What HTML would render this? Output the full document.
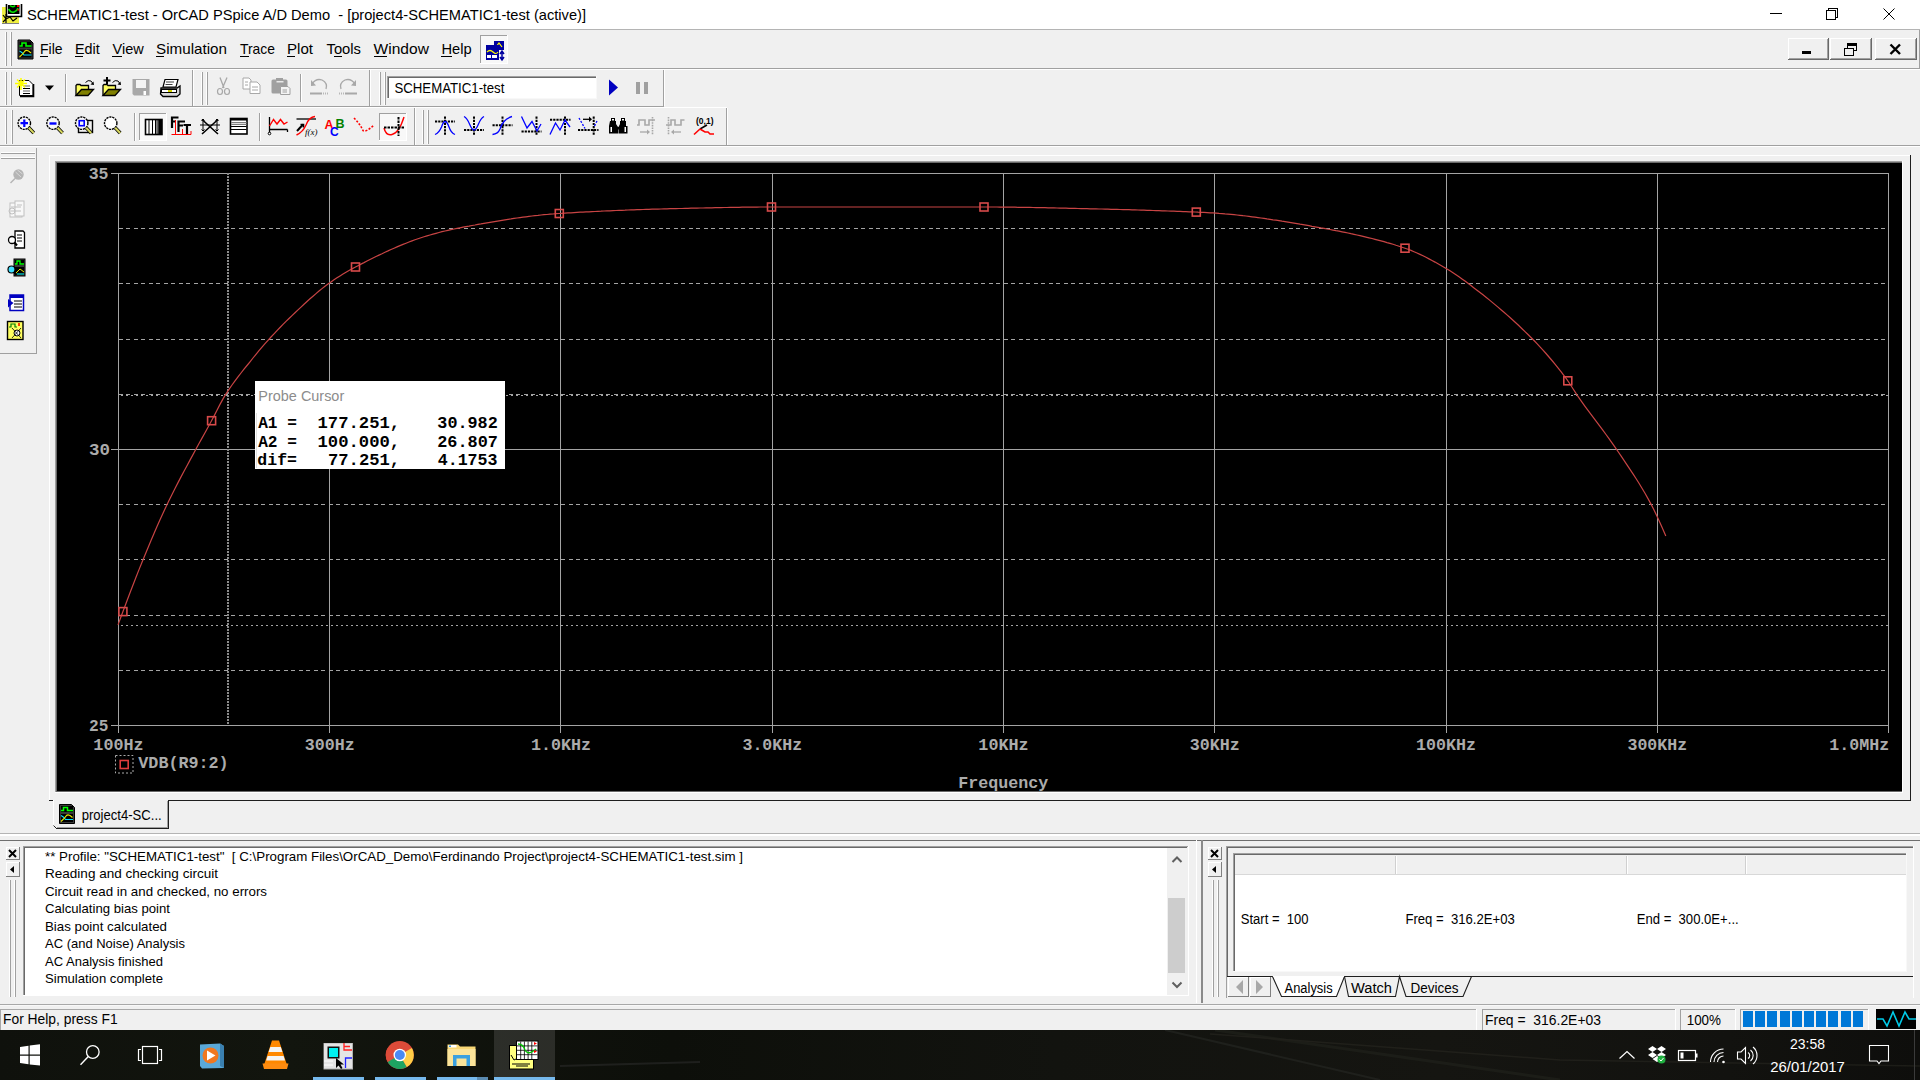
<!DOCTYPE html>
<html><head><meta charset="utf-8"><title>OrCAD PSpice</title>
<style>
html,body{margin:0;padding:0;width:1920px;height:1080px;overflow:hidden;background:#f0f0f0}
svg{position:absolute;left:0;top:0;display:block}
</style></head><body>
<svg width="1920" height="1080" viewBox="0 0 1920 1080" shape-rendering="crispEdges">
<rect x="0" y="0" width="1920" height="29" fill="#fff" />
<text x="27" y="20" font-family="Liberation Sans" font-size="15" font-weight="400" fill="#000" text-anchor="start" style="white-space:pre" textLength="559" lengthAdjust="spacingAndGlyphs" >SCHEMATIC1-test - OrCAD PSpice A/D Demo  - [project4-SCHEMATIC1-test (active)]</text>
<rect x="1770" y="13" width="12" height="1" fill="#000" />
<g fill="none" stroke="#000" stroke-width="1"><rect x="1826.5" y="10.5" width="9" height="9"/><path d="M1828.5,10.5 V8.5 H1837.5 V17.5 H1835.5"/><path d="M1883.5,8.5 L1894.5,19.5 M1894.5,8.5 L1883.5,19.5" shape-rendering="auto"/></g>
<rect x="0" y="29" width="1920" height="1" fill="#b4b4b4" />
<rect x="5" y="32" width="1" height="34" fill="#fff" />
<rect x="6" y="32" width="1" height="34" fill="#a0a0a0" />
<rect x="10" y="32" width="1" height="34" fill="#fff" />
<rect x="11" y="32" width="1" height="34" fill="#a0a0a0" />
<text x="40" y="53.5" font-family="Liberation Sans" font-size="15" font-weight="400" fill="#000" text-anchor="start" style="white-space:pre" textLength="22.5" lengthAdjust="spacingAndGlyphs" >File</text>
<text x="75" y="53.5" font-family="Liberation Sans" font-size="15" font-weight="400" fill="#000" text-anchor="start" style="white-space:pre" textLength="24.7" lengthAdjust="spacingAndGlyphs" >Edit</text>
<text x="112.5" y="53.5" font-family="Liberation Sans" font-size="15" font-weight="400" fill="#000" text-anchor="start" style="white-space:pre" textLength="31.2" lengthAdjust="spacingAndGlyphs" >View</text>
<text x="156" y="53.5" font-family="Liberation Sans" font-size="15" font-weight="400" fill="#000" text-anchor="start" style="white-space:pre" textLength="71" lengthAdjust="spacingAndGlyphs" >Simulation</text>
<text x="240" y="53.5" font-family="Liberation Sans" font-size="15" font-weight="400" fill="#000" text-anchor="start" style="white-space:pre" textLength="35" lengthAdjust="spacingAndGlyphs" >Trace</text>
<text x="287" y="53.5" font-family="Liberation Sans" font-size="15" font-weight="400" fill="#000" text-anchor="start" style="white-space:pre" textLength="26" lengthAdjust="spacingAndGlyphs" >Plot</text>
<text x="326.5" y="53.5" font-family="Liberation Sans" font-size="15" font-weight="400" fill="#000" text-anchor="start" style="white-space:pre" textLength="34.5" lengthAdjust="spacingAndGlyphs" >Tools</text>
<text x="373.6" y="53.5" font-family="Liberation Sans" font-size="15" font-weight="400" fill="#000" text-anchor="start" style="white-space:pre" textLength="55.3" lengthAdjust="spacingAndGlyphs" >Window</text>
<text x="441.4" y="53.5" font-family="Liberation Sans" font-size="15" font-weight="400" fill="#000" text-anchor="start" style="white-space:pre" textLength="30.2" lengthAdjust="spacingAndGlyphs" >Help</text>
<rect x="40" y="56" width="8" height="1" fill="#000" />
<rect x="75" y="56" width="8" height="1" fill="#000" />
<rect x="112" y="56" width="10" height="1" fill="#000" />
<rect x="156" y="56" width="8" height="1" fill="#000" />
<rect x="240" y="56" width="9" height="1" fill="#000" />
<rect x="287" y="56" width="8" height="1" fill="#000" />
<rect x="334" y="56" width="8" height="1" fill="#000" />
<rect x="374" y="56" width="13" height="1" fill="#000" />
<rect x="441" y="56" width="11" height="1" fill="#000" />
<rect x="480" y="35" width="28" height="29" fill="#f8f8f8" />
<rect x="480" y="35" width="28" height="1" fill="#a0a0a0" />
<rect x="480" y="35" width="1" height="29" fill="#a0a0a0" />
<rect x="480" y="63" width="28" height="1" fill="#fff" />
<rect x="507" y="35" width="1" height="29" fill="#fff" />
<rect x="1788" y="38" width="41" height="22" fill="#f0f0f0" />
<rect x="1788" y="38" width="41" height="1" fill="#fff" />
<rect x="1788" y="38" width="1" height="22" fill="#fff" />
<rect x="1788" y="59" width="41" height="1" fill="#696969" />
<rect x="1828" y="38" width="1" height="22" fill="#696969" />
<rect x="1789" y="58" width="39" height="1" fill="#a0a0a0" />
<rect x="1827" y="39" width="1" height="20" fill="#a0a0a0" />
<rect x="1830" y="38" width="42" height="22" fill="#f0f0f0" />
<rect x="1830" y="38" width="42" height="1" fill="#fff" />
<rect x="1830" y="38" width="1" height="22" fill="#fff" />
<rect x="1830" y="59" width="42" height="1" fill="#696969" />
<rect x="1871" y="38" width="1" height="22" fill="#696969" />
<rect x="1831" y="58" width="40" height="1" fill="#a0a0a0" />
<rect x="1870" y="39" width="1" height="20" fill="#a0a0a0" />
<rect x="1875" y="38" width="42" height="22" fill="#f0f0f0" />
<rect x="1875" y="38" width="42" height="1" fill="#fff" />
<rect x="1875" y="38" width="1" height="22" fill="#fff" />
<rect x="1875" y="59" width="42" height="1" fill="#696969" />
<rect x="1916" y="38" width="1" height="22" fill="#696969" />
<rect x="1876" y="58" width="40" height="1" fill="#a0a0a0" />
<rect x="1915" y="39" width="1" height="20" fill="#a0a0a0" />
<rect x="1802" y="51" width="9" height="3" fill="#000" />
<g fill="none" stroke="#000" stroke-width="1.2"><rect x="1844.5" y="48.5" width="9" height="7"/><path d="M1847.5,48.5 V43.5 H1856.5 V50.5 H1853.5"/><path d="M1847.5,44.5 H1856.5" stroke-width="2"/></g>
<path d="M1890.5,44.5 L1900,54 M1900,44.5 L1890.5,54" stroke="#000" stroke-width="2.4" shape-rendering="auto"/>
<rect x="1919" y="30" width="1" height="38" fill="#a0a0a0" />
<rect x="0" y="68" width="1920" height="1" fill="#a0a0a0" />
<rect x="0" y="69" width="1920" height="1" fill="#fff" />
<rect x="5" y="72" width="1" height="33" fill="#fff" />
<rect x="6" y="72" width="1" height="33" fill="#a0a0a0" />
<rect x="10" y="72" width="1" height="33" fill="#fff" />
<rect x="11" y="72" width="1" height="33" fill="#a0a0a0" />
<rect x="65" y="74" width="1" height="28" fill="#a0a0a0" />
<rect x="66" y="74" width="1" height="28" fill="#fff" />
<rect x="192" y="70" width="1" height="36" fill="#a0a0a0" />
<rect x="193" y="70" width="1" height="36" fill="#fff" />
<rect x="201" y="72" width="1" height="33" fill="#fff" />
<rect x="202" y="72" width="1" height="33" fill="#a0a0a0" />
<rect x="206" y="72" width="1" height="33" fill="#fff" />
<rect x="207" y="72" width="1" height="33" fill="#a0a0a0" />
<rect x="300" y="74" width="1" height="28" fill="#a0a0a0" />
<rect x="301" y="74" width="1" height="28" fill="#fff" />
<rect x="369" y="70" width="1" height="36" fill="#a0a0a0" />
<rect x="370" y="70" width="1" height="36" fill="#fff" />
<rect x="379" y="72" width="1" height="33" fill="#fff" />
<rect x="380" y="72" width="1" height="33" fill="#a0a0a0" />
<rect x="384" y="72" width="1" height="33" fill="#fff" />
<rect x="385" y="72" width="1" height="33" fill="#a0a0a0" />
<rect x="387" y="76" width="210" height="23" fill="#fff" />
<rect x="387" y="76" width="210" height="1" fill="#a0a0a0" />
<rect x="387" y="76" width="1" height="23" fill="#a0a0a0" />
<rect x="388" y="77" width="208" height="1" fill="#696969" />
<rect x="388" y="77" width="1" height="21" fill="#696969" />
<rect x="387" y="98" width="210" height="1" fill="#f8f8f8" />
<rect x="596" y="76" width="1" height="23" fill="#f8f8f8" />
<text x="394.4" y="92.6" font-family="Liberation Sans" font-size="14" font-weight="400" fill="#000" text-anchor="start" style="white-space:pre" textLength="110" lengthAdjust="spacingAndGlyphs" >SCHEMATIC1-test</text>
<path d="M609,79.5 L618,87.5 L609,95.5 Z" fill="#0000c0" shape-rendering="auto"/>
<rect x="636" y="82" width="4" height="12" fill="#a0a0a0" />
<rect x="644" y="82" width="4" height="12" fill="#a0a0a0" />
<rect x="663" y="70" width="1" height="36" fill="#a0a0a0" />
<rect x="664" y="70" width="1" height="36" fill="#fff" />
<rect x="0" y="106" width="664" height="1" fill="#a0a0a0" />
<rect x="0" y="107" width="727" height="1" fill="#fff" />
<rect x="5" y="110" width="1" height="34" fill="#fff" />
<rect x="6" y="110" width="1" height="34" fill="#a0a0a0" />
<rect x="11" y="110" width="1" height="34" fill="#fff" />
<rect x="12" y="110" width="1" height="34" fill="#a0a0a0" />
<rect x="134" y="113" width="1" height="28" fill="#a0a0a0" />
<rect x="135" y="113" width="1" height="28" fill="#fff" />
<rect x="259" y="113" width="1" height="28" fill="#a0a0a0" />
<rect x="260" y="113" width="1" height="28" fill="#fff" />
<rect x="139" y="113" width="28" height="28" fill="#f8f8f8" />
<rect x="139" y="113" width="28" height="1" fill="#a0a0a0" />
<rect x="139" y="113" width="1" height="28" fill="#a0a0a0" />
<rect x="139" y="140" width="28" height="1" fill="#fff" />
<rect x="166" y="113" width="1" height="28" fill="#fff" />
<rect x="379" y="113" width="28" height="28" fill="#f8f8f8" />
<rect x="379" y="113" width="28" height="1" fill="#a0a0a0" />
<rect x="379" y="113" width="1" height="28" fill="#a0a0a0" />
<rect x="379" y="140" width="28" height="1" fill="#fff" />
<rect x="406" y="113" width="1" height="28" fill="#fff" />
<rect x="414" y="108" width="1" height="37" fill="#a0a0a0" />
<rect x="415" y="108" width="1" height="37" fill="#fff" />
<rect x="422" y="110" width="1" height="34" fill="#fff" />
<rect x="423" y="110" width="1" height="34" fill="#a0a0a0" />
<rect x="427" y="110" width="1" height="34" fill="#fff" />
<rect x="428" y="110" width="1" height="34" fill="#a0a0a0" />
<rect x="726" y="108" width="1" height="37" fill="#a0a0a0" />
<rect x="727" y="108" width="1" height="37" fill="#fff" />
<rect x="0" y="145" width="1920" height="1" fill="#a0a0a0" />
<rect x="0" y="146" width="1920" height="1" fill="#fff" />
<rect x="36" y="148" width="1" height="206" fill="#a0a0a0" />
<rect x="0" y="353" width="37" height="1" fill="#a0a0a0" />
<rect x="1" y="152" width="34" height="1" fill="#fff" />
<rect x="1" y="153" width="34" height="1" fill="#a0a0a0" />
<rect x="1" y="157" width="34" height="1" fill="#fff" />
<rect x="1" y="158" width="34" height="1" fill="#a0a0a0" />
<rect x="49" y="155" width="1862" height="1" fill="#fff" />
<rect x="49" y="155" width="1" height="643" fill="#fff" />
<rect x="1910" y="155" width="1" height="646" fill="#1e1e1e" />
<rect x="49" y="800" width="1862" height="1" fill="#1e1e1e" />
<rect x="55" y="161" width="1848" height="632" fill="#fff" />
<rect x="55" y="161" width="1847" height="631" fill="#a0a0a0" />
<rect x="56" y="162" width="1846" height="630" fill="#696969" />
<rect x="57" y="163" width="1845" height="628" fill="#000" />
<g shape-rendering="auto">
<line x1="329.5" y1="173" x2="329.5" y2="733" stroke="#a4a4a4" stroke-width="1"/>
<line x1="560.5" y1="173" x2="560.5" y2="733" stroke="#a4a4a4" stroke-width="1"/>
<line x1="772.5" y1="173" x2="772.5" y2="733" stroke="#a4a4a4" stroke-width="1"/>
<line x1="1003.5" y1="173" x2="1003.5" y2="733" stroke="#a4a4a4" stroke-width="1"/>
<line x1="1214.5" y1="173" x2="1214.5" y2="733" stroke="#a4a4a4" stroke-width="1"/>
<line x1="1446.5" y1="173" x2="1446.5" y2="733" stroke="#a4a4a4" stroke-width="1"/>
<line x1="1657.5" y1="173" x2="1657.5" y2="733" stroke="#a4a4a4" stroke-width="1"/>
<line x1="1888.5" y1="173" x2="1888.5" y2="733" stroke="#a4a4a4" stroke-width="1"/>
<line x1="111" y1="725.5" x2="1888" y2="725.5" stroke="#a4a4a4" stroke-width="1"/>
<line x1="119" y1="670.5" x2="1888" y2="670.5" stroke="#a4a4a4" stroke-width="1" stroke-dasharray="4 3 4 4" shape-rendering="crispEdges"/>
<line x1="119" y1="615.5" x2="1888" y2="615.5" stroke="#a4a4a4" stroke-width="1" stroke-dasharray="4 3 4 4" shape-rendering="crispEdges"/>
<line x1="119" y1="559.5" x2="1888" y2="559.5" stroke="#a4a4a4" stroke-width="1" stroke-dasharray="4 3 4 4" shape-rendering="crispEdges"/>
<line x1="119" y1="504.5" x2="1888" y2="504.5" stroke="#a4a4a4" stroke-width="1" stroke-dasharray="4 3 4 4" shape-rendering="crispEdges"/>
<line x1="111" y1="449.5" x2="1888" y2="449.5" stroke="#a4a4a4" stroke-width="1"/>
<line x1="119" y1="394.5" x2="1888" y2="394.5" stroke="#a4a4a4" stroke-width="1" stroke-dasharray="4 3 4 4" shape-rendering="crispEdges"/>
<line x1="119" y1="339.5" x2="1888" y2="339.5" stroke="#a4a4a4" stroke-width="1" stroke-dasharray="4 3 4 4" shape-rendering="crispEdges"/>
<line x1="119" y1="283.5" x2="1888" y2="283.5" stroke="#a4a4a4" stroke-width="1" stroke-dasharray="4 3 4 4" shape-rendering="crispEdges"/>
<line x1="119" y1="228.5" x2="1888" y2="228.5" stroke="#a4a4a4" stroke-width="1" stroke-dasharray="4 3 4 4" shape-rendering="crispEdges"/>
<line x1="111" y1="173.5" x2="1888" y2="173.5" stroke="#a4a4a4" stroke-width="1"/>
<line x1="118.5" y1="173" x2="118.5" y2="733" stroke="#a4a4a4" stroke-width="1"/>
<line x1="228" y1="173" x2="228" y2="725" stroke="#8c8c8c" stroke-width="2" stroke-dasharray="2 1" shape-rendering="crispEdges"/>
<line x1="121" y1="395.5" x2="1888" y2="395.5" stroke="#a4a4a4" stroke-width="1" stroke-dasharray="2 3" shape-rendering="crispEdges"/>
<line x1="121" y1="625.5" x2="1888" y2="625.5" stroke="#a4a4a4" stroke-width="1" stroke-dasharray="2 3" shape-rendering="crispEdges"/>
<path d="M118.0,624.9 L121.0,616.7 L124.0,608.7 L127.0,600.7 L130.0,592.8 L133.0,585.0 L136.0,577.2 L139.0,569.6 L142.0,562.2 L145.0,554.9 L148.0,547.7 L151.0,540.5 L154.0,533.5 L157.0,526.6 L160.0,519.8 L163.0,513.2 L166.0,506.7 L169.0,500.5 L172.0,494.4 L175.0,488.4 L178.0,482.6 L181.0,476.9 L184.0,471.2 L187.0,465.7 L190.0,460.1 L193.0,454.6 L196.0,449.0 L199.0,443.5 L202.0,438.1 L205.0,432.7 L208.0,427.3 L211.0,421.8 L214.0,416.1 L217.0,410.2 L220.0,404.4 L223.0,398.9 L226.0,393.9 L229.0,389.3 L232.0,385.0 L235.0,380.9 L238.0,376.9 L241.0,373.0 L244.0,369.2 L247.0,365.5 L250.0,361.8 L253.0,358.0 L256.0,354.3 L259.0,350.7 L262.0,347.1 L265.0,343.7 L268.0,340.3 L271.0,337.0 L274.0,333.8 L277.0,330.6 L280.0,327.5 L283.0,324.4 L286.0,321.4 L289.0,318.5 L292.0,315.6 L295.0,312.8 L298.0,309.9 L301.0,307.1 L304.0,304.3 L307.0,301.5 L310.0,298.8 L313.0,296.2 L316.0,293.6 L319.0,291.0 L322.0,288.6 L325.0,286.3 L328.0,284.0 L331.0,281.9 L334.0,279.8 L337.0,277.8 L340.0,275.9 L343.0,274.1 L346.0,272.3 L349.0,270.6 L352.0,268.9 L355.0,267.3 L358.0,265.7 L361.0,264.1 L364.0,262.6 L367.0,261.0 L370.0,259.5 L373.0,258.0 L376.0,256.5 L379.0,255.1 L382.0,253.7 L385.0,252.2 L388.0,250.9 L391.0,249.5 L394.0,248.2 L397.0,246.9 L400.0,245.6 L403.0,244.4 L406.0,243.2 L409.0,242.0 L412.0,240.9 L415.0,239.8 L418.0,238.8 L421.0,237.8 L424.0,236.8 L427.0,235.9 L430.0,235.0 L433.0,234.1 L436.0,233.3 L439.0,232.5 L442.0,231.7 L445.0,231.0 L448.0,230.3 L451.0,229.6 L454.0,229.0 L457.0,228.4 L460.0,227.8 L463.0,227.2 L466.0,226.6 L469.0,226.1 L472.0,225.5 L475.0,225.0 L478.0,224.4 L481.0,223.9 L484.0,223.3 L487.0,222.8 L490.0,222.3 L493.0,221.8 L496.0,221.3 L499.0,220.8 L502.0,220.3 L505.0,219.8 L508.0,219.3 L511.0,218.9 L514.0,218.4 L517.0,218.0 L520.0,217.6 L523.0,217.2 L526.0,216.8 L529.0,216.4 L532.0,216.0 L535.0,215.7 L538.0,215.4 L541.0,215.0 L544.0,214.7 L547.0,214.5 L550.0,214.2 L553.0,214.0 L556.0,213.7 L559.0,213.5 L562.0,213.3 L565.0,213.1 L568.0,212.9 L571.0,212.8 L574.0,212.6 L577.0,212.4 L580.0,212.2 L583.0,212.1 L586.0,211.9 L589.0,211.8 L592.0,211.6 L595.0,211.5 L598.0,211.3 L601.0,211.2 L604.0,211.0 L607.0,210.9 L610.0,210.8 L613.0,210.6 L616.0,210.5 L619.0,210.4 L622.0,210.3 L625.0,210.2 L628.0,210.0 L631.0,209.9 L634.0,209.8 L637.0,209.7 L640.0,209.6 L643.0,209.5 L646.0,209.4 L649.0,209.3 L652.0,209.2 L655.0,209.1 L658.0,209.1 L661.0,209.0 L664.0,208.9 L667.0,208.8 L670.0,208.7 L673.0,208.7 L676.0,208.6 L679.0,208.5 L682.0,208.5 L685.0,208.4 L688.0,208.3 L691.0,208.2 L694.0,208.2 L697.0,208.1 L700.0,208.0 L703.0,208.0 L706.0,207.9 L709.0,207.8 L712.0,207.8 L715.0,207.7 L718.0,207.6 L721.0,207.6 L724.0,207.5 L727.0,207.5 L730.0,207.4 L733.0,207.4 L736.0,207.3 L739.0,207.3 L742.0,207.2 L745.0,207.2 L748.0,207.1 L751.0,207.1 L754.0,207.1 L757.0,207.1 L760.0,207.0 L763.0,207.0 L766.0,207.0 L769.0,207.0 L772.0,207.0 L775.0,207.0 L778.0,207.0 L781.0,207.0 L784.0,207.0 L787.0,207.0 L790.0,207.0 L793.0,207.0 L796.0,207.0 L799.0,207.0 L802.0,207.0 L805.0,207.0 L808.0,207.0 L811.0,207.0 L814.0,207.0 L817.0,207.0 L820.0,207.0 L823.0,207.0 L826.0,207.0 L829.0,207.0 L832.0,207.0 L835.0,207.0 L838.0,207.0 L841.0,207.0 L844.0,207.0 L847.0,207.0 L850.0,207.0 L853.0,207.0 L856.0,207.0 L859.0,207.0 L862.0,207.0 L865.0,207.0 L868.0,207.0 L871.0,207.0 L874.0,207.0 L877.0,207.0 L880.0,207.0 L883.0,207.0 L886.0,207.0 L889.0,207.0 L892.0,207.0 L895.0,207.0 L898.0,207.0 L901.0,207.0 L904.0,207.0 L907.0,207.0 L910.0,207.0 L913.0,207.0 L916.0,207.0 L919.0,207.0 L922.0,207.0 L925.0,207.0 L928.0,207.0 L931.0,207.0 L934.0,207.0 L937.0,207.0 L940.0,207.0 L943.0,207.0 L946.0,207.0 L949.0,207.0 L952.0,207.0 L955.0,207.0 L958.0,207.0 L961.0,207.0 L964.0,207.0 L967.0,207.0 L970.0,207.0 L973.0,207.0 L976.0,207.0 L979.0,207.0 L982.0,207.0 L985.0,207.0 L988.0,207.0 L991.0,207.0 L994.0,207.0 L997.0,207.0 L1000.0,207.1 L1003.0,207.1 L1006.0,207.1 L1009.0,207.1 L1012.0,207.2 L1015.0,207.2 L1018.0,207.3 L1021.0,207.3 L1024.0,207.3 L1027.0,207.4 L1030.0,207.4 L1033.0,207.5 L1036.0,207.6 L1039.0,207.6 L1042.0,207.7 L1045.0,207.7 L1048.0,207.8 L1051.0,207.9 L1054.0,207.9 L1057.0,208.0 L1060.0,208.1 L1063.0,208.1 L1066.0,208.2 L1069.0,208.3 L1072.0,208.3 L1075.0,208.4 L1078.0,208.5 L1081.0,208.6 L1084.0,208.6 L1087.0,208.7 L1090.0,208.8 L1093.0,208.8 L1096.0,208.9 L1099.0,209.0 L1102.0,209.0 L1105.0,209.1 L1108.0,209.2 L1111.0,209.3 L1114.0,209.3 L1117.0,209.4 L1120.0,209.5 L1123.0,209.6 L1126.0,209.7 L1129.0,209.7 L1132.0,209.8 L1135.0,209.9 L1138.0,210.0 L1141.0,210.1 L1144.0,210.2 L1147.0,210.3 L1150.0,210.4 L1153.0,210.5 L1156.0,210.6 L1159.0,210.7 L1162.0,210.8 L1165.0,210.9 L1168.0,211.0 L1171.0,211.1 L1174.0,211.2 L1177.0,211.3 L1180.0,211.4 L1183.0,211.6 L1186.0,211.7 L1189.0,211.8 L1192.0,211.9 L1195.0,212.0 L1198.0,212.2 L1201.0,212.3 L1204.0,212.4 L1207.0,212.6 L1210.0,212.8 L1213.0,212.9 L1216.0,213.1 L1219.0,213.4 L1222.0,213.6 L1225.0,213.9 L1228.0,214.1 L1231.0,214.4 L1234.0,214.7 L1237.0,215.0 L1240.0,215.3 L1243.0,215.7 L1246.0,216.0 L1249.0,216.4 L1252.0,216.8 L1255.0,217.2 L1258.0,217.6 L1261.0,218.0 L1264.0,218.4 L1267.0,218.9 L1270.0,219.3 L1273.0,219.8 L1276.0,220.2 L1279.0,220.7 L1282.0,221.2 L1285.0,221.6 L1288.0,222.1 L1291.0,222.6 L1294.0,223.1 L1297.0,223.6 L1300.0,224.2 L1303.0,224.7 L1306.0,225.2 L1309.0,225.7 L1312.0,226.3 L1315.0,226.8 L1318.0,227.3 L1321.0,227.9 L1324.0,228.4 L1327.0,229.0 L1330.0,229.5 L1333.0,230.1 L1336.0,230.7 L1339.0,231.2 L1342.0,231.8 L1345.0,232.4 L1348.0,233.0 L1351.0,233.7 L1354.0,234.3 L1357.0,235.0 L1360.0,235.7 L1363.0,236.4 L1366.0,237.1 L1369.0,237.8 L1372.0,238.5 L1375.0,239.3 L1378.0,240.1 L1381.0,240.9 L1384.0,241.7 L1387.0,242.6 L1390.0,243.4 L1393.0,244.3 L1396.0,245.3 L1399.0,246.2 L1402.0,247.2 L1405.0,248.2 L1408.0,249.3 L1411.0,250.4 L1414.0,251.7 L1417.0,253.0 L1420.0,254.4 L1423.0,255.8 L1426.0,257.3 L1429.0,258.9 L1432.0,260.5 L1435.0,262.1 L1438.0,263.8 L1441.0,265.5 L1444.0,267.2 L1447.0,269.0 L1450.0,270.8 L1453.0,272.7 L1456.0,274.7 L1459.0,276.8 L1462.0,278.9 L1465.0,281.1 L1468.0,283.3 L1471.0,285.6 L1474.0,287.9 L1477.0,290.2 L1480.0,292.5 L1483.0,294.8 L1486.0,297.2 L1489.0,299.6 L1492.0,302.1 L1495.0,304.6 L1498.0,307.1 L1501.0,309.7 L1504.0,312.2 L1507.0,314.9 L1510.0,317.5 L1513.0,320.3 L1516.0,323.0 L1519.0,325.8 L1522.0,328.7 L1525.0,331.6 L1528.0,334.5 L1531.0,337.5 L1534.0,340.5 L1537.0,343.6 L1540.0,346.8 L1543.0,350.1 L1546.0,353.5 L1549.0,357.0 L1552.0,360.5 L1555.0,364.2 L1558.0,367.9 L1561.0,371.7 L1564.0,375.7 L1567.0,379.7 L1570.0,384.0 L1573.0,388.7 L1576.0,393.4 L1579.0,397.8 L1582.0,402.1 L1585.0,406.3 L1588.0,410.4 L1591.0,414.4 L1594.0,418.4 L1597.0,422.4 L1600.0,426.4 L1603.0,430.4 L1606.0,434.5 L1609.0,438.6 L1612.0,442.8 L1615.0,447.1 L1618.0,451.5 L1621.0,455.9 L1624.0,460.3 L1627.0,464.8 L1630.0,469.3 L1633.0,473.8 L1636.0,478.5 L1639.0,483.3 L1642.0,488.2 L1645.0,493.3 L1648.0,498.6 L1651.0,504.1 L1654.0,509.9 L1657.0,516.2 L1660.0,522.7 L1663.0,529.5 L1665.8,536.0" fill="none" stroke="#c84444" stroke-width="1.2"/>
<rect x="118.9" y="607.6" width="8" height="8" fill="none" stroke="#d84a4a" stroke-width="1.6"/>
<rect x="207.6" y="416.7" width="8" height="8" fill="none" stroke="#d84a4a" stroke-width="1.6"/>
<rect x="351.5" y="263.0" width="8" height="8" fill="none" stroke="#d84a4a" stroke-width="1.6"/>
<rect x="555.3" y="209.5" width="8" height="8" fill="none" stroke="#d84a4a" stroke-width="1.6"/>
<rect x="767.5" y="203.0" width="8" height="8" fill="none" stroke="#d84a4a" stroke-width="1.6"/>
<rect x="980.0" y="203.0" width="8" height="8" fill="none" stroke="#d84a4a" stroke-width="1.6"/>
<rect x="1192.3" y="208.1" width="8" height="8" fill="none" stroke="#d84a4a" stroke-width="1.6"/>
<rect x="1401.0" y="244.2" width="8" height="8" fill="none" stroke="#d84a4a" stroke-width="1.6"/>
<rect x="1563.8" y="376.8" width="8" height="8" fill="none" stroke="#d84a4a" stroke-width="1.6"/>
<text x="88.67" y="179.3" font-family="Liberation Mono" font-weight="700" font-size="17" fill="#ababab" textLength="19.86" lengthAdjust="spacingAndGlyphs" style="white-space:pre">35</text>
<text x="89.02" y="455.2" font-family="Liberation Mono" font-weight="700" font-size="17" fill="#ababab" textLength="21.03" lengthAdjust="spacingAndGlyphs" style="white-space:pre">30</text>
<text x="89.03" y="731.2" font-family="Liberation Mono" font-weight="700" font-size="17" fill="#ababab" textLength="19.38" lengthAdjust="spacingAndGlyphs" style="white-space:pre">25</text>
<text x="93.35" y="750.3" font-family="Liberation Mono" font-weight="700" font-size="17" fill="#ababab" textLength="50.32" lengthAdjust="spacingAndGlyphs" style="white-space:pre">100Hz</text>
<text x="304.82" y="750.3" font-family="Liberation Mono" font-weight="700" font-size="17" fill="#ababab" textLength="49.96" lengthAdjust="spacingAndGlyphs" style="white-space:pre">300Hz</text>
<text x="530.98" y="750.3" font-family="Liberation Mono" font-weight="700" font-size="17" fill="#ababab" textLength="60.05" lengthAdjust="spacingAndGlyphs" style="white-space:pre">1.0KHz</text>
<text x="742.45" y="750.3" font-family="Liberation Mono" font-weight="700" font-size="17" fill="#ababab" textLength="59.71" lengthAdjust="spacingAndGlyphs" style="white-space:pre">3.0KHz</text>
<text x="978.35" y="750.3" font-family="Liberation Mono" font-weight="700" font-size="17" fill="#ababab" textLength="50.31" lengthAdjust="spacingAndGlyphs" style="white-space:pre">10KHz</text>
<text x="1189.82" y="750.3" font-family="Liberation Mono" font-weight="700" font-size="17" fill="#ababab" textLength="49.96" lengthAdjust="spacingAndGlyphs" style="white-space:pre">30KHz</text>
<text x="1415.98" y="750.3" font-family="Liberation Mono" font-weight="700" font-size="17" fill="#ababab" textLength="60.05" lengthAdjust="spacingAndGlyphs" style="white-space:pre">100KHz</text>
<text x="1627.45" y="750.3" font-family="Liberation Mono" font-weight="700" font-size="17" fill="#ababab" textLength="59.71" lengthAdjust="spacingAndGlyphs" style="white-space:pre">300KHz</text>
<text x="1829.13" y="750.3" font-family="Liberation Mono" font-weight="700" font-size="17" fill="#ababab" textLength="60.05" lengthAdjust="spacingAndGlyphs" style="white-space:pre">1.0MHz</text>
<clipPath id="pc"><rect x="57" y="163" width="1845" height="628"/></clipPath>
<g clip-path="url(#pc)">
<text x="958.27" y="787.9" font-family="Liberation Mono" font-weight="700" font-size="17" fill="#ababab" textLength="90.09" lengthAdjust="spacingAndGlyphs" style="white-space:pre">Frequency</text>
</g>
<rect x="115.5" y="755.5" width="17.5" height="17.5" fill="none" stroke="#ababab" stroke-width="1" stroke-dasharray="2 2"/>
<rect x="120.2" y="760.5" width="8" height="8" fill="none" stroke="#e03c3c" stroke-width="1.6"/>
<text x="138.30" y="768.3" font-family="Liberation Mono" font-weight="700" font-size="17" fill="#ababab" textLength="90.37" lengthAdjust="spacingAndGlyphs" style="white-space:pre">VDB(R9:2)</text>
</g>
<rect x="255" y="381" width="250" height="88" fill="#fff" />
<text x="258.34" y="401" font-family="Liberation Sans" font-size="14.5" font-weight="400" fill="#8c8c8c" text-anchor="start" style="white-space:pre" textLength="85.89" lengthAdjust="spacingAndGlyphs" >Probe Cursor</text>
<rect x="256" y="413" width="1" height="55" fill="#e0e0e0" />
<text x="258.2" y="428" font-family="Liberation Mono" font-size="16" font-weight="700" fill="#000" text-anchor="start" style="white-space:pre" textLength="38.72" lengthAdjust="spacingAndGlyphs" >A1 =</text>
<text x="317.55" y="428" font-family="Liberation Mono" font-size="16" font-weight="700" fill="#000" text-anchor="start" style="white-space:pre" textLength="82.61" lengthAdjust="spacingAndGlyphs" >177.251,</text>
<text x="437.36" y="428" font-family="Liberation Mono" font-size="16" font-weight="700" fill="#000" text-anchor="start" style="white-space:pre" textLength="60.36" lengthAdjust="spacingAndGlyphs" >30.982</text>
<text x="258.2" y="447" font-family="Liberation Mono" font-size="16" font-weight="700" fill="#000" text-anchor="start" style="white-space:pre" textLength="38.72" lengthAdjust="spacingAndGlyphs" >A2 =</text>
<text x="317.55" y="447" font-family="Liberation Mono" font-size="16" font-weight="700" fill="#000" text-anchor="start" style="white-space:pre" textLength="82.61" lengthAdjust="spacingAndGlyphs" >100.000,</text>
<text x="437.19" y="447" font-family="Liberation Mono" font-size="16" font-weight="700" fill="#000" text-anchor="start" style="white-space:pre" textLength="60.71" lengthAdjust="spacingAndGlyphs" >26.807</text>
<text x="257.38" y="465" font-family="Liberation Mono" font-size="16" font-weight="700" fill="#000" text-anchor="start" style="white-space:pre" textLength="39.56" lengthAdjust="spacingAndGlyphs" >dif=</text>
<text x="327.97" y="465" font-family="Liberation Mono" font-size="16" font-weight="700" fill="#000" text-anchor="start" style="white-space:pre" textLength="72.17" lengthAdjust="spacingAndGlyphs" >77.251,</text>
<text x="437.7" y="465" font-family="Liberation Mono" font-size="16" font-weight="700" fill="#000" text-anchor="start" style="white-space:pre" textLength="59.85" lengthAdjust="spacingAndGlyphs" >4.1753</text>
<g shape-rendering="auto"><rect x="2" y="7" width="17" height="16.5" fill="#f0f040"/><path d="M2,23.5 H19" stroke="#808080" stroke-width="1"/><path d="M3,15 L6,19 L3,22 M6,19 L10,17 L13,21 L17,18 M6,14 V23" stroke="#000" stroke-width="1.2" fill="none"/><path d="M6.5,4 V16.5 H21.5 V4" stroke="#000" stroke-width="1.6" fill="#fff"/><rect x="8" y="5" width="11.5" height="9" fill="#000"/><path d="M8.5,9 Q11,13 14,12 Q17,11 18,8 M10,5.5 Q13,8 15,5.5" stroke="#00e000" stroke-width="1.6" fill="none"/><rect x="17" y="5" width="2" height="2" fill="#ff0000"/><rect x="17.5" y="9" width="1.6" height="1.6" fill="#ff0000"/></g>
<g shape-rendering="auto"><g transform="translate(18,40) scale(1.0)"><path d="M0,0 H12 L15,3 V19 H0 Z" fill="#3a3a3a" stroke="#000" stroke-width="1"/><rect x="1.5" y="1.5" width="12" height="6" fill="#000"/><path d="M1.5,6 H4 V3 H8 V6 H13.5" stroke="#00ff00" stroke-width="1.5" fill="none"/><rect x="1.5" y="9.5" width="12" height="8" fill="#000"/><path d="M1.5,11 Q4,12 6,15 H13.5" stroke="#00e0ff" stroke-width="1.2" fill="none"/><path d="M1.5,17 Q5,14 7,11 Q9,9 13,13" stroke="#e8e800" stroke-width="1.2" fill="none"/></g></g>
<g shape-rendering="auto"><rect x="485" y="40" width="18" height="20" fill="none"/><rect x="494" y="41" width="10" height="9" fill="#0000a0"/><path d="M496,47 L499,43 L502,47" stroke="#ffff00" fill="none" stroke-width="1.2"/><rect x="486" y="45" width="13" height="15" fill="#0000a0"/><path d="M487,52 Q490,49 493,52 T498,52" stroke="#ffff00" fill="none" stroke-width="1.2"/><rect x="487" y="55" width="4" height="3" fill="#fff"/><rect x="492" y="55" width="5" height="3" fill="#fff"/><path d="M502,52 V59 M500,54 L502,51 L504,54 M500,57 L502,60 L504,57" stroke="#0000a0" stroke-width="1.5" fill="none"/></g>
<g shape-rendering="auto"><path d="M19.5,80.5 H29 L33,84.5 V95.5 H19.5 Z" fill="#fff" stroke="#000" stroke-width="1"/><path d="M33.5,84 V96.5 H20" stroke="#000" stroke-width="1.6" fill="none"/><path d="M23,86 H30 M23,88.5 H30 M23,91 H30 M23,93.5 H30" stroke="#606060" stroke-width="1.2"/><path d="M23,88.5 H30 M23,93.5 H30" stroke="#000" stroke-width="1.2"/><path d="M21,78 V90 M15,83.5 H27 M17,79.5 L25,87.5 M25,79.5 L17,87.5" stroke="#ffff00" stroke-width="1.5"/><circle cx="21" cy="83.5" r="2.5" fill="#ffff00"/></g>
<g shape-rendering="auto"><path d="M45,85.5 H54 L49.5,90.5 Z" fill="#000"/></g>
<g shape-rendering="auto"><g transform="translate(0,0)"><path d="M76,95.5 V85.5 L77,84.5 H80 L81,85.5 H88.5 V89.5" fill="#ffff60" stroke="#000" stroke-width="1.3"/><path d="M76,95.5 L81.5,89.5 H93.5 L88,95.5 Z" fill="#808000" stroke="#000" stroke-width="1.3"/><path d="M85.5,82.5 Q88,79.5 91,81 L92.5,83" stroke="#000" fill="none" stroke-width="1"/><path d="M90.5,84.5 L94,85 L93.5,81.5 Z" fill="#000"/></g><g transform="translate(27,0)"><path d="M76,95.5 V85.5 L77,84.5 H80 L81,85.5 H88.5 V89.5" fill="#ffff60" stroke="#000" stroke-width="1.3"/><path d="M76,95.5 L81.5,89.5 H93.5 L88,95.5 Z" fill="#808000" stroke="#000" stroke-width="1.3"/><path d="M85.5,82.5 Q88,79.5 91,81 L92.5,83" stroke="#000" fill="none" stroke-width="1"/><path d="M90.5,84.5 L94,85 L93.5,81.5 Z" fill="#000"/><path d="M80,77 V84 M76.5,80.5 H83.5" stroke="#000" stroke-width="2"/></g></g>
<g shape-rendering="auto"><path d="M132.5,79 H149.5 V95.5 H134 L132.5,94 Z" fill="#a8a8a8"/><rect x="136" y="80" width="10" height="8" fill="#f4f4f4"/><rect x="143.5" y="91" width="2.5" height="4" fill="#fff"/></g>
<g shape-rendering="auto"><path d="M165,79.5 H178 L176,87 H163 Z" fill="#fff" stroke="#000" stroke-width="1.2"/><path d="M166,82 H174 M165.5,84.5 H172.5" stroke="#404040" stroke-width="1"/><path d="M161,88 H177 L180,86 V94 L177,96.5 H163 L160.5,94 Z" fill="#d8d8d8" stroke="#000" stroke-width="1.3"/><rect x="161.5" y="89.5" width="15" height="3" fill="#fff" stroke="#000" stroke-width="1"/><rect x="168" y="90" width="4" height="2" fill="#d0d000"/></g>
<g shape-rendering="auto"><path d="M220,77.5 L224,88 M227,77.5 L222.5,88" stroke="#a8a8a8" stroke-width="1.3" fill="none"/><ellipse cx="220" cy="91.5" rx="2.5" ry="3" fill="none" stroke="#a8a8a8" stroke-width="1.2"/><ellipse cx="227" cy="91.5" rx="2.5" ry="3" fill="none" stroke="#a8a8a8" stroke-width="1.2"/></g>
<g shape-rendering="auto"><path d="M243,78 H249 L251,80 V89 H243 Z" fill="#fff" stroke="#a8a8a8" stroke-width="1"/><path d="M250,82 H257 L260,85 V93.5 H250 Z" fill="#fff" stroke="#a8a8a8" stroke-width="1"/><path d="M245,82 H248 M245,85 H248 M252,87 H258 M252,90 H258" stroke="#a8a8a8" stroke-width="1"/></g>
<g shape-rendering="auto"><rect x="271.5" y="79.5" width="16" height="14" rx="1.5" fill="#a0a0a0"/><rect x="276" y="78" width="7" height="3" fill="#a0a0a0"/><rect x="276.5" y="81" width="7" height="1.5" fill="#e8e8e8"/><path d="M280.5,86.5 H288 L290,88.5 V94.5 H280.5 Z" fill="#f4f4f4" stroke="#a0a0a0" stroke-width="1"/><path d="M282.5,90 H287 M282.5,92 H287" stroke="#a0a0a0"/></g>
<g shape-rendering="auto"><path d="M312,84 Q316,78 322,80 Q328,83 326,89" stroke="#a8a8a8" stroke-width="1.3" fill="none"/><path d="M311,80 L311,86 L316,85.5 Z" fill="#a8a8a8"/><rect x="310" y="92.5" width="12" height="2" fill="#a8a8a8"/><path d="M323.5,92.5 V94.5 M325.5,92.5 V94.5 M327.5,92.5 V94.5" stroke="#a8a8a8" stroke-width="0.8"/><path d="M355,84 Q351,78 345,80 Q339,83 341,89" stroke="#a8a8a8" stroke-width="1.3" fill="none"/><path d="M356,80 L356,86 L351,85.5 Z" fill="#a8a8a8"/><rect x="345" y="92.5" width="12" height="2" fill="#a8a8a8"/><path d="M339.5,92.5 V94.5 M341.5,92.5 V94.5 M343.5,92.5 V94.5" stroke="#a8a8a8" stroke-width="0.8"/></g>
<g shape-rendering="auto"><g><circle cx="24.3" cy="123.2" r="6" fill="#f8f8f8"/><path d="M24.3,119.5 V127 M20.5,123.2 H28" stroke="#0000ff" stroke-width="2.2"/><circle cx="24.3" cy="123.2" r="6.2" fill="none" stroke="#000" stroke-width="1.4" stroke-dasharray="2.2 0.8"/><path d="M28.8,127.7 L33.8,133" stroke="#000" stroke-width="3.6"/><path d="M28.8,127.7 L33.8,133" stroke="#d8d860" stroke-width="2"/></g></g>
<g shape-rendering="auto"><g><circle cx="53" cy="123.2" r="6" fill="#f8f8f8"/><path d="M49.5,123.5 H56.5" stroke="#0000ff" stroke-width="2.4"/><circle cx="53" cy="123.2" r="6.2" fill="none" stroke="#000" stroke-width="1.4" stroke-dasharray="2.2 0.8"/><path d="M57.5,127.7 L62.5,133" stroke="#000" stroke-width="3.6"/><path d="M57.5,127.7 L62.5,133" stroke="#d8d860" stroke-width="2"/></g></g>
<g shape-rendering="auto"><rect x="78.5" y="120.5" width="14" height="12" fill="none" stroke="#000" stroke-width="1.4"/><g><circle cx="81.7" cy="123.2" r="6" fill="#f8f8f8"/><rect x="79.2" y="120.7" width="5" height="5" fill="none" stroke="#0000ff" stroke-width="1.6"/><circle cx="81.7" cy="123.2" r="6.2" fill="none" stroke="#000" stroke-width="1.4" stroke-dasharray="2.2 0.8"/><path d="M86.2,127.7 L91.2,133" stroke="#000" stroke-width="3.6"/><path d="M86.2,127.7 L91.2,133" stroke="#d8d860" stroke-width="2"/></g></g>
<g shape-rendering="auto"><g><circle cx="110.7" cy="123.2" r="6" fill="#fff"/><circle cx="110.7" cy="123.2" r="6.2" fill="none" stroke="#000" stroke-width="1.4" stroke-dasharray="2.2 0.8"/><path d="M115.2,127.7 L120.2,133" stroke="#000" stroke-width="3.6"/><path d="M115.2,127.7 L120.2,133" stroke="#d8d860" stroke-width="2"/></g></g>
<g shape-rendering="auto"><rect x="145.5" y="119.5" width="16.5" height="15" fill="#fff" stroke="#000" stroke-width="1.6"/><path d="M149,119.5 V134.5 M152.5,119.5 V134.5 M155.5,119.5 V134.5 M157,119.5 V134.5 M158.3,119.5 V134.5" stroke="#000" stroke-width="1"/><rect x="159" y="119.5" width="3" height="15" fill="#000"/></g>
<g shape-rendering="auto"><path d="M172,128 V117.5 H178.5 M172,121.5 H176" stroke="#000" stroke-width="2.2" fill="none"/><path d="M178.5,132 V121.5 H185 M178.5,125.5 H183" stroke="#000" stroke-width="2.2" fill="none"/><path d="M183.5,125 H191 M187,125 V135" stroke="#000" stroke-width="2.2" fill="none"/><path d="M171.5,134.5 H191 V131 M175.5,134.5 V120 M182.5,134.5 V129" stroke="#ff0000" stroke-width="1" fill="none"/></g>
<g shape-rendering="auto"><path d="M202,119.5 L218,134 M218,119.5 L202,134" stroke="#000" stroke-width="1.6"/><path d="M200,125 H220" stroke="#000" stroke-width="1"/><path d="M203,119 V131 M217,119 V131 M201.5,120.5 L203,119 L204.5,120.5 M215.5,120.5 L217,119 L218.5,120.5 M201.5,129.5 L203,131 L204.5,129.5 M215.5,129.5 L217,131 L218.5,129.5" stroke="#000" stroke-width="1" fill="none"/></g>
<g shape-rendering="auto"><rect x="230.5" y="118.5" width="16.5" height="15.5" fill="#fff" stroke="#000" stroke-width="1.6"/><rect x="230.5" y="118.5" width="16.5" height="2" fill="#000"/><path d="M231,122.5 H246.5 M231,124.3 H246.5" stroke="#808080" stroke-width="1.2"/><path d="M231,126.5 H246.5 M231,129.5 H246.5" stroke="#000" stroke-width="1.2"/></g>
<g shape-rendering="auto"><path d="M269.5,117 V134 M269.5,129.5 H287.5 M287.5,129.5 V132" stroke="#000" stroke-width="1.3" fill="none"/><circle cx="269.5" cy="133.5" r="1.3" fill="#fff" stroke="#000"/><path d="M269.5,126 L273.5,119.5 L277,124 L280.5,119.5 L284,124 L287.5,122" stroke="#ff0000" stroke-width="1.4" fill="none"/></g>
<g shape-rendering="auto"><path d="M296.5,119 H316" stroke="#000" stroke-width="1.3"/><path d="M297,131 L303,124.5" stroke="#000" stroke-width="2"/><path d="M300.5,124.5 H303.5 V127.5" stroke="#000" stroke-width="1.6" fill="none"/><path d="M296.5,135 Q303,132 306,125 Q309,117 315,116.5" stroke="#ff0000" stroke-width="1.4" fill="none"/><text x="305" y="135" font-family="Liberation Serif" font-size="9" font-style="italic" fill="#000">f(x)</text></g>
<g shape-rendering="auto"><text x="324.5" y="128.5" font-family="Liberation Sans" font-weight="bold" font-size="12.5" fill="#ff0000">A</text><text x="335.5" y="128" font-family="Liberation Sans" font-weight="bold" font-size="12.5" fill="#008000">B</text><text x="330" y="136" font-family="Liberation Sans" font-weight="bold" font-size="12" fill="#0000ff">C</text></g>
<g shape-rendering="auto"><path d="M354,118 Q360,124 363,130.5 Q366,132.5 373.5,125.5" stroke="#ff0000" stroke-width="1.6" fill="none" stroke-dasharray="2 1.6"/></g>
<g shape-rendering="auto"><path d="M384,128 Q386,136 392,134.5 Q399,133 404,117" stroke="#ff0000" stroke-width="1.4" fill="none"/><path d="M384,127.5 H404" stroke="#000" stroke-width="2" stroke-dasharray="2.5 1"/><path d="M398.5,117 V136" stroke="#000" stroke-width="2" stroke-dasharray="2.5 1"/></g>
<g shape-rendering="auto"><path d="M435,121.5 H455" stroke="#000" stroke-width="2" stroke-dasharray="2.2 1"/><path d="M445,116.5 V135" stroke="#000" stroke-width="2" stroke-dasharray="2.2 1"/><path d="M435,134.5 Q439,133 441.5,127 Q443.5,121.5 445,121.5 Q447,121.5 449,127 Q451,133 455,134.5" stroke="#0000ff" stroke-width="1.3" fill="none"/></g>
<g shape-rendering="auto"><path d="M464,130 H484" stroke="#000" stroke-width="2" stroke-dasharray="2.2 1"/><path d="M474,116.5 V135" stroke="#000" stroke-width="2" stroke-dasharray="2.2 1"/><path d="M464,116.5 Q467,118 469.5,124 Q472,130 474,130 Q476,130 478.5,124 Q481,118 484,116.5" stroke="#0000ff" stroke-width="1.3" fill="none"/></g>
<g shape-rendering="auto"><path d="M492.5,125.3 H512.5" stroke="#000" stroke-width="2" stroke-dasharray="2.2 1"/><path d="M502.5,116.5 V135" stroke="#000" stroke-width="2" stroke-dasharray="2.2 1"/><path d="M492.5,134.5 Q498,134 500,129 Q503,119 512,116.5" stroke="#0000ff" stroke-width="1.3" fill="none"/></g>
<g shape-rendering="auto"><path d="M521.5,131.5 H541.5" stroke="#000" stroke-width="2" stroke-dasharray="2.2 1"/><path d="M536.5,116.5 V135" stroke="#000" stroke-width="2" stroke-dasharray="2.2 1"/><path d="M521.5,116.5 L527,128 L532,121.5 L537,131 L541,124" stroke="#0000ff" stroke-width="1.3" fill="none"/></g>
<g shape-rendering="auto"><path d="M550,119.8 H570.5" stroke="#000" stroke-width="2" stroke-dasharray="2.2 1"/><path d="M565,116.5 V135" stroke="#000" stroke-width="2" stroke-dasharray="2.2 1"/><path d="M550,134.5 L555.5,123 L560,130 L565,120 L570,127" stroke="#0000ff" stroke-width="1.3" fill="none"/></g>
<g shape-rendering="auto"><path d="M578,130 H598.5" stroke="#000" stroke-width="2" stroke-dasharray="2.2 1"/><path d="M593.7,116.5 V135" stroke="#000" stroke-width="2" stroke-dasharray="2.2 1"/><path d="M583,119.3 H590" stroke="#000" stroke-width="1.3"/><path d="M589,116.5 L592,119.3 L589,122 Z" fill="#000"/><path d="M579,118 L585,128.5 M597,121 L594,127" stroke="#0000ff" stroke-width="1.3" stroke-dasharray="2 1.5"/></g>
<g shape-rendering="auto"><rect x="611" y="118" width="4" height="3" fill="#000"/><rect x="621" y="118" width="4" height="3" fill="#000"/><rect x="612" y="119" width="2" height="1.5" fill="#fff"/><rect x="622" y="119" width="2" height="1.5" fill="#fff"/><path d="M610,121 H616 V124 L618,127 V133.5 H609 V126 Z M620,121 H626 V126 L627.5,126 V133.5 H618.5 V127 L620,124 Z" fill="#000"/><rect x="614" y="127" width="10" height="2.5" fill="#000"/><rect x="610.5" y="127" width="1.5" height="5" fill="#fff"/><rect x="624.5" y="127" width="1.5" height="5" fill="#fff"/></g>
<g shape-rendering="auto"><path d="M637,125 H639 V120 H645 V125 H649 V120 H655" stroke="#a8a8a8" stroke-width="1.6" fill="none"/><path d="M652.5,117 V135" stroke="#a8a8a8" stroke-width="1.6" stroke-dasharray="1.6 1"/><path d="M640,132 H648" stroke="#a8a8a8" stroke-width="1.3"/><path d="M647,129.5 L650,132 L647,134.5 Z" fill="#a8a8a8"/></g>
<g shape-rendering="auto"><path d="M666,125 H671 V120 H675 V125 H681 V120 H684.5" stroke="#a8a8a8" stroke-width="1.6" fill="none"/><path d="M668.5,117 V135" stroke="#a8a8a8" stroke-width="1.6" stroke-dasharray="1.6 1"/><path d="M673,132 H681" stroke="#a8a8a8" stroke-width="1.3"/><path d="M674,129.5 L671,132 L674,134.5 Z" fill="#a8a8a8"/></g>
<g shape-rendering="auto"><text x="696" y="123.5" font-family="Liberation Sans" font-weight="bold" font-size="8.5" fill="#000">(0,1)</text><path d="M694,134.5 L700,129" stroke="#ff0000" stroke-width="1.6"/><path d="M700,129 L707,125" stroke="#000" stroke-width="1.6"/><path d="M700,129 L705,132 H708 L710,134 H714" stroke="#ff0000" stroke-width="1.6" fill="none"/></g>
<g shape-rendering="auto"><circle cx="18.5" cy="174.5" r="5.2" fill="#b4b4b4"/><path d="M10.5,183 L15,178.5" stroke="#b4b4b4" stroke-width="1.4"/><path d="M15.5,172 L21,177 M17.5,170 L22.5,174" stroke="#d8d8d8" stroke-width="1"/></g>
<g transform="translate(-2,0)">
<g shape-rendering="auto"><rect x="12" y="203" width="12" height="14" fill="#f8f8f8" stroke="#c0c0c0" stroke-width="1"/><rect x="17" y="201" width="9" height="15" fill="#f8f8f8" stroke="#c0c0c0" stroke-width="1"/><path d="M13,207 H23 M13,211 H23 M19,205 H24" stroke="#c0c0c0"/><circle cx="14" cy="211" r="3" fill="none" stroke="#c0c0c0"/></g>
<g shape-rendering="auto"><path d="M17,231 H25 L26.5,232.5 V248 H17 Z" fill="#fff" stroke="#000" stroke-width="1.3"/><path d="M19,235 H24 M19,238 H24 M19,241 H24" stroke="#000" stroke-width="1"/><circle cx="14" cy="240" r="3.5" fill="#fff" stroke="#000" stroke-width="1.3"/><path d="M16.5,242.5 L19,245.5" stroke="#000" stroke-width="2"/></g>
<g shape-rendering="auto"><rect x="16" y="259" width="11" height="17" fill="#3a3a3a" stroke="#000"/><rect x="17" y="260" width="9" height="5" fill="#000"/><path d="M17,264 H19 V261 H22 V264 H26" stroke="#00ff00" stroke-width="1.3" fill="none"/><rect x="17" y="267" width="9" height="8" fill="#000"/><path d="M18,273 L22,269 L26,272" stroke="#e8e800" stroke-width="1" fill="none"/><path d="M18,274 H26" stroke="#00e0e0" stroke-width="1.2"/><circle cx="13.5" cy="269.5" r="3.5" fill="#40e0ff" stroke="#000" stroke-width="1.2"/><path d="M16,272 L18.5,275" stroke="#000" stroke-width="2"/></g>
<g shape-rendering="auto"><rect x="12" y="295" width="13.5" height="15.5" fill="#fff" stroke="#0000c0" stroke-width="1.5"/><rect x="12" y="295" width="13.5" height="3" fill="#0000c0"/><path d="M16,301 H24 M16,304 H24 M16,307 H24" stroke="#000" stroke-width="1.2"/><path d="M10,299 L15.5,303 L10,307.5 Z" fill="#0000c0"/></g>
<g shape-rendering="auto"><rect x="9.5" y="321.5" width="15.5" height="18" fill="#ffff60" stroke="#000" stroke-width="1.4"/><path d="M11,327 H13 V324 H17 V327 H19" stroke="#008000" stroke-width="1.2" fill="none"/><rect x="20" y="323" width="2" height="3" fill="#ff4000"/><circle cx="19" cy="333" r="3" fill="#fff" stroke="#000"/><path d="M14,328 L23,338 M23,328 L14,338" stroke="#000" stroke-width="0.8"/></g>
</g>
<g shape-rendering="auto"><g transform="translate(59.5,804.5) scale(1.0)"><path d="M0,0 H12 L15,3 V19 H0 Z" fill="#3a3a3a" stroke="#000" stroke-width="1"/><rect x="1.5" y="1.5" width="12" height="6" fill="#000"/><path d="M1.5,6 H4 V3 H8 V6 H13.5" stroke="#00ff00" stroke-width="1.5" fill="none"/><rect x="1.5" y="9.5" width="12" height="8" fill="#000"/><path d="M1.5,11 Q4,12 6,15 H13.5" stroke="#00e0ff" stroke-width="1.2" fill="none"/><path d="M1.5,17 Q5,14 7,11 Q9,9 13,13" stroke="#e8e800" stroke-width="1.2" fill="none"/></g></g>
<rect x="49" y="798" width="1" height="2" fill="#fff" />
<rect x="49" y="800" width="4" height="1" fill="#1e1e1e" />
<rect x="53" y="800" width="115" height="1" fill="#f0f0f0" />
<rect x="53" y="800" width="1" height="26" fill="#fff" />
<path d="M53.5,825.5 L56.5,828.5" stroke="#1e1e1e" stroke-width="1" shape-rendering="auto"/>
<rect x="56" y="828" width="113" height="1" fill="#1e1e1e" />
<rect x="57" y="827" width="111" height="1" fill="#a0a0a0" />
<rect x="168" y="800" width="1" height="29" fill="#1e1e1e" />
<rect x="167" y="801" width="1" height="26" fill="#a0a0a0" />
<text x="81.7" y="819.6" font-family="Liberation Sans" font-size="14" font-weight="400" fill="#000" text-anchor="start" style="white-space:pre" textLength="80" lengthAdjust="spacingAndGlyphs" >project4-SC...</text>
<rect x="0" y="833" width="1920" height="1" fill="#b4b4b4" />
<rect x="0" y="834" width="1920" height="2" fill="#fff" />
<rect x="0" y="840" width="1920" height="1" fill="#6e6e6e" />
<rect x="6" y="847" width="14" height="13" fill="#f0f0f0" />
<rect x="6" y="847" width="14" height="1" fill="#fff" />
<rect x="6" y="847" width="1" height="13" fill="#fff" />
<rect x="6" y="859" width="14" height="1" fill="#808080" />
<rect x="19" y="847" width="1" height="13" fill="#808080" />
<path d="M9,850 L16,857 M16,850 L9,857" stroke="#000" stroke-width="2" shape-rendering="auto"/>
<rect x="6" y="862" width="14" height="15" fill="#f0f0f0" />
<rect x="6" y="862" width="14" height="1" fill="#fff" />
<rect x="6" y="862" width="1" height="15" fill="#fff" />
<rect x="6" y="876" width="14" height="1" fill="#808080" />
<rect x="19" y="862" width="1" height="15" fill="#808080" />
<path d="M10,869.5 L14,866 L14,873 Z" fill="#000" shape-rendering="auto"/>
<rect x="9" y="880" width="1" height="117" fill="#fff" />
<rect x="10" y="880" width="1" height="117" fill="#a0a0a0" />
<rect x="14" y="880" width="1" height="117" fill="#fff" />
<rect x="15" y="880" width="1" height="117" fill="#a0a0a0" />
<rect x="23" y="846" width="1166" height="150" fill="#fff" />
<rect x="23" y="846" width="1166" height="1" fill="#a0a0a0" />
<rect x="23" y="846" width="1" height="150" fill="#a0a0a0" />
<rect x="24" y="847" width="1164" height="1" fill="#696969" />
<rect x="24" y="847" width="1" height="148" fill="#696969" />
<rect x="23" y="995" width="1166" height="1" fill="#fff" />
<rect x="1188" y="846" width="1" height="150" fill="#fff" />
<rect x="1187" y="847" width="1" height="148" fill="#f0f0f0" />
<rect x="1167" y="848" width="20" height="147" fill="#f0f0f0" />
<path d="M1172.5,862 L1177,857.5 L1181.5,862 M1172.5,982.5 L1177,987 L1181.5,982.5" fill="none" stroke="#606060" stroke-width="2" shape-rendering="auto"/>
<rect x="1168" y="898" width="17" height="75" fill="#cdcdcd" />
<text x="45" y="860.8" font-family="Liberation Sans" font-size="13.5" font-weight="400" fill="#000" text-anchor="start" style="white-space:pre" textLength="698" lengthAdjust="spacingAndGlyphs" >** Profile: &quot;SCHEMATIC1-test&quot;  [ C:\Program Files\OrCAD_Demo\Ferdinando Project\project4-SCHEMATIC1-test.sim ]</text>
<text x="45" y="878.3" font-family="Liberation Sans" font-size="13.5" font-weight="400" fill="#000" text-anchor="start" style="white-space:pre" textLength="173" lengthAdjust="spacingAndGlyphs" >Reading and checking circuit</text>
<text x="45" y="895.8" font-family="Liberation Sans" font-size="13.5" font-weight="400" fill="#000" text-anchor="start" style="white-space:pre" textLength="222" lengthAdjust="spacingAndGlyphs" >Circuit read in and checked, no errors</text>
<text x="45" y="913.3" font-family="Liberation Sans" font-size="13.5" font-weight="400" fill="#000" text-anchor="start" style="white-space:pre" textLength="125" lengthAdjust="spacingAndGlyphs" >Calculating bias point</text>
<text x="45" y="930.8" font-family="Liberation Sans" font-size="13.5" font-weight="400" fill="#000" text-anchor="start" style="white-space:pre" textLength="122" lengthAdjust="spacingAndGlyphs" >Bias point calculated</text>
<text x="45" y="948.3" font-family="Liberation Sans" font-size="13.5" font-weight="400" fill="#000" text-anchor="start" style="white-space:pre" textLength="140" lengthAdjust="spacingAndGlyphs" >AC (and Noise) Analysis</text>
<text x="45" y="965.8" font-family="Liberation Sans" font-size="13.5" font-weight="400" fill="#000" text-anchor="start" style="white-space:pre" textLength="118" lengthAdjust="spacingAndGlyphs" >AC Analysis finished</text>
<text x="45" y="983.3" font-family="Liberation Sans" font-size="13.5" font-weight="400" fill="#000" text-anchor="start" style="white-space:pre" textLength="118" lengthAdjust="spacingAndGlyphs" >Simulation complete</text>
<rect x="1196" y="840" width="1" height="163" fill="#fff" />
<rect x="1201" y="840" width="2" height="163" fill="#8a8a8a" />
<rect x="1208" y="847" width="14" height="13" fill="#f0f0f0" />
<rect x="1208" y="847" width="14" height="1" fill="#fff" />
<rect x="1208" y="847" width="1" height="13" fill="#fff" />
<rect x="1208" y="859" width="14" height="1" fill="#808080" />
<rect x="1221" y="847" width="1" height="13" fill="#808080" />
<path d="M1211,850 L1218,857 M1218,850 L1211,857" stroke="#000" stroke-width="2" shape-rendering="auto"/>
<rect x="1208" y="862" width="14" height="15" fill="#f0f0f0" />
<rect x="1208" y="862" width="14" height="1" fill="#fff" />
<rect x="1208" y="862" width="1" height="15" fill="#fff" />
<rect x="1208" y="876" width="14" height="1" fill="#808080" />
<rect x="1221" y="862" width="1" height="15" fill="#808080" />
<path d="M1212,869.5 L1216,866 L1216,873 Z" fill="#000" shape-rendering="auto"/>
<rect x="1212" y="880" width="1" height="117" fill="#fff" />
<rect x="1213" y="880" width="1" height="117" fill="#a0a0a0" />
<rect x="1217" y="880" width="1" height="117" fill="#fff" />
<rect x="1218" y="880" width="1" height="117" fill="#a0a0a0" />
<rect x="1226" y="846" width="688" height="152" fill="#f0f0f0" />
<rect x="1226" y="846" width="688" height="1" fill="#a0a0a0" />
<rect x="1226" y="846" width="1" height="152" fill="#a0a0a0" />
<rect x="1227" y="847" width="686" height="1" fill="#696969" />
<rect x="1227" y="847" width="1" height="150" fill="#696969" />
<rect x="1913" y="846" width="1" height="152" fill="#fff" />
<rect x="1233" y="853" width="674" height="119" fill="#fff" />
<rect x="1233" y="853" width="674" height="1" fill="#a0a0a0" />
<rect x="1233" y="853" width="1" height="119" fill="#a0a0a0" />
<rect x="1234" y="854" width="672" height="1" fill="#696969" />
<rect x="1234" y="854" width="1" height="117" fill="#696969" />
<rect x="1906" y="853" width="1" height="119" fill="#f8f8f8" />
<rect x="1233" y="971" width="674" height="1" fill="#f8f8f8" />
<rect x="1235" y="855" width="671" height="19" fill="#f0f0f0" />
<rect x="1235" y="874" width="671" height="1" fill="#d8d8d8" />
<rect x="1395" y="856" width="1" height="18" fill="#d0d0d0" />
<rect x="1396" y="856" width="1" height="18" fill="#fff" />
<rect x="1626" y="856" width="1" height="18" fill="#d0d0d0" />
<rect x="1627" y="856" width="1" height="18" fill="#fff" />
<rect x="1745" y="856" width="1" height="18" fill="#d0d0d0" />
<rect x="1746" y="856" width="1" height="18" fill="#fff" />
<text x="1240.8" y="924.4" font-family="Liberation Sans" font-size="14" font-weight="400" fill="#000" text-anchor="start" style="white-space:pre" textLength="67.7" lengthAdjust="spacingAndGlyphs" >Start =  100</text>
<text x="1405.4" y="924.4" font-family="Liberation Sans" font-size="14" font-weight="400" fill="#000" text-anchor="start" style="white-space:pre" textLength="109.4" lengthAdjust="spacingAndGlyphs" >Freq =  316.2E+03</text>
<text x="1636.7" y="924.4" font-family="Liberation Sans" font-size="14" font-weight="400" fill="#000" text-anchor="start" style="white-space:pre" textLength="102" lengthAdjust="spacingAndGlyphs" >End =  300.0E+...</text>
<rect x="1227" y="976" width="686" height="1" fill="#1e1e1e" />
<rect x="1227" y="977" width="686" height="21" fill="#f0f0f0" />
<rect x="1228" y="977" width="21" height="20" fill="#f0f0f0" />
<rect x="1228" y="977" width="21" height="1" fill="#fff" />
<rect x="1228" y="977" width="1" height="20" fill="#fff" />
<rect x="1228" y="996" width="21" height="1" fill="#808080" />
<rect x="1248" y="977" width="1" height="20" fill="#808080" />
<rect x="1250" y="977" width="21" height="20" fill="#f0f0f0" />
<rect x="1250" y="977" width="21" height="1" fill="#fff" />
<rect x="1250" y="977" width="1" height="20" fill="#fff" />
<rect x="1250" y="996" width="21" height="1" fill="#808080" />
<rect x="1270" y="977" width="1" height="20" fill="#808080" />
<path d="M1243,980 L1236,987 L1243,994 Z M1256,980 L1263,987 L1256,994 Z" fill="#a8a8a8" shape-rendering="auto"/>
<path d="M1272.5,976.5 L1281.5,996.5 L1336.5,996.5 L1344.5,976.5" fill="#fff" stroke="#1e1e1e" stroke-width="1.1" shape-rendering="auto"/>
<path d="M1344.5,976.5 L1348.5,996.5 L1395.5,996.5 L1399.5,976.5 L1406,996.5 L1463,996.5 L1471.5,976.5" fill="none" stroke="#1e1e1e" stroke-width="1.1" shape-rendering="auto"/>
<rect x="1273" y="976" width="71" height="1" fill="#fff" />
<text x="1284.6" y="993" font-family="Liberation Sans" font-size="14" font-weight="400" fill="#000" text-anchor="start" style="white-space:pre" textLength="48" lengthAdjust="spacingAndGlyphs" >Analysis</text>
<text x="1351" y="993" font-family="Liberation Sans" font-size="14" font-weight="400" fill="#000" text-anchor="start" style="white-space:pre" textLength="41" lengthAdjust="spacingAndGlyphs" >Watch</text>
<text x="1410.6" y="993" font-family="Liberation Sans" font-size="14" font-weight="400" fill="#000" text-anchor="start" style="white-space:pre" textLength="48" lengthAdjust="spacingAndGlyphs" >Devices</text>
<rect x="0" y="1004" width="1920" height="26" fill="#f0f0f0" />
<rect x="0" y="1004" width="1920" height="1" fill="#a8a8a8" />
<rect x="0" y="1005" width="1920" height="1" fill="#f8f8f8" />
<rect x="0" y="1009" width="1477" height="1" fill="#a8a8a8" />
<rect x="0" y="1009" width="1" height="21" fill="#a8a8a8" />
<rect x="1476" y="1009" width="1" height="21" fill="#fff" />
<text x="3" y="1024.4" font-family="Liberation Sans" font-size="14" font-weight="400" fill="#000" text-anchor="start" style="white-space:pre" textLength="114.6" lengthAdjust="spacingAndGlyphs" >For Help, press F1</text>
<rect x="1482" y="1009" width="194" height="1" fill="#a0a0a0" />
<rect x="1482" y="1009" width="1" height="21" fill="#a0a0a0" />
<rect x="1675" y="1009" width="1" height="21" fill="#fff" />
<rect x="1680" y="1009" width="56" height="1" fill="#a0a0a0" />
<rect x="1680" y="1009" width="1" height="21" fill="#a0a0a0" />
<rect x="1735" y="1009" width="1" height="21" fill="#fff" />
<rect x="1740" y="1009" width="129" height="1" fill="#a0a0a0" />
<rect x="1740" y="1009" width="1" height="21" fill="#a0a0a0" />
<rect x="1868" y="1009" width="1" height="21" fill="#fff" />
<text x="1485" y="1025" font-family="Liberation Sans" font-size="14" font-weight="400" fill="#000" text-anchor="start" style="white-space:pre" textLength="116" lengthAdjust="spacingAndGlyphs" >Freq =  316.2E+03</text>
<text x="1686.7" y="1025" font-family="Liberation Sans" font-size="14" font-weight="400" fill="#000" text-anchor="start" style="white-space:pre" textLength="34.3" lengthAdjust="spacingAndGlyphs" >100%</text>
<rect x="1743.0" y="1011" width="10" height="16" fill="#0078d7" />
<rect x="1755.2" y="1011" width="10" height="16" fill="#0078d7" />
<rect x="1767.4" y="1011" width="10" height="16" fill="#0078d7" />
<rect x="1779.6" y="1011" width="10" height="16" fill="#0078d7" />
<rect x="1791.8" y="1011" width="10" height="16" fill="#0078d7" />
<rect x="1804.0" y="1011" width="10" height="16" fill="#0078d7" />
<rect x="1816.2" y="1011" width="10" height="16" fill="#0078d7" />
<rect x="1828.4" y="1011" width="10" height="16" fill="#0078d7" />
<rect x="1840.6" y="1011" width="10" height="16" fill="#0078d7" />
<rect x="1852.8" y="1011" width="10" height="16" fill="#0078d7" />
<rect x="1876" y="1009" width="40" height="20" fill="#000" />
<path d="M1877,1019 L1883,1019 L1887,1026 L1893,1012 L1899,1026 L1905,1012 L1909,1019 L1916,1019" fill="none" stroke="#00c8e6" stroke-width="1.6" shape-rendering="auto"/>
<defs><linearGradient id="tbg" x1="0" y1="0" x2="1" y2="0"><stop offset="0" stop-color="#0f110c"/><stop offset="0.15" stop-color="#12150e"/><stop offset="0.35" stop-color="#0d0f0a"/><stop offset="0.55" stop-color="#12130f"/><stop offset="0.75" stop-color="#151511"/><stop offset="0.9" stop-color="#12120f"/><stop offset="1" stop-color="#0e0e0c"/></linearGradient></defs>
<rect x="0" y="1030" width="1920" height="50" fill="url(#tbg)" />
<clipPath id="tbc"><rect x="0" y="1030" width="1920" height="50"/></clipPath><g shape-rendering="auto" opacity="0.5" clip-path="url(#tbc)"><path d="M1165,1030 L1380,1080" stroke="#2a2c28" stroke-width="2"/><path d="M1215,1030 L1560,1080" stroke="#24261f" stroke-width="3"/><path d="M1210,1034 L1560,1060 L1920,1066" stroke="#2c2b24" stroke-width="1.5" fill="none"/><path d="M560,1066 L700,1062" stroke="#303030" stroke-width="2"/></g>
<g shape-rendering="auto"><path d="M20,1047 L28.5,1045.8 V1054.5 H20 Z M29.7,1045.6 L40,1044.3 V1054.5 H29.7 Z M20,1055.7 H28.5 V1064.3 L20,1063 Z M29.7,1055.7 H40 V1065.6 L29.7,1064.4 Z" fill="#fff"/></g>
<g shape-rendering="auto"><circle cx="92.8" cy="1052" r="6.3" fill="none" stroke="#fff" stroke-width="1.3"/><path d="M88.3,1056.6 L80.5,1064.8" stroke="#fff" stroke-width="1.4"/></g>
<g shape-rendering="auto"><rect x="142.5" y="1046.5" width="15" height="17" fill="none" stroke="#fff" stroke-width="1.2"/><path d="M141,1049.5 H138.5 V1060.5 H141 M159,1049.5 H161.5 V1060.5 H159" fill="none" stroke="#fff" stroke-width="1.2"/></g>
<g shape-rendering="auto"><path d="M200,1044.5 L220,1043.5 L224,1046 V1068 L202,1068.5 L200,1066 Z" fill="#5aa8d8"/><path d="M220,1043.5 L224,1046 V1068 L220,1066 Z" fill="#3a80b0"/><circle cx="210.5" cy="1055.5" r="8" fill="#f07820"/><path d="M207,1050.5 L215.5,1055.5 L207,1060.5 Z" fill="#fff"/></g>
<g shape-rendering="auto"><path d="M272,1040.5 H279 L287,1065 H264 Z" fill="#ff8800"/><path d="M270.3,1047 H280.8 L282.4,1052 H268.6 Z M267.6,1056 H283.6 L285,1060.5 H266.2 Z" fill="#f4f4f4"/><path d="M262.5,1063.5 H288.5 L287,1069 H264 Z" fill="#ff8c10"/></g>
<g shape-rendering="auto"><rect x="323.5" y="1043" width="29.5" height="26.5" fill="#b0b0b0"/><rect x="324" y="1043.5" width="28" height="25" fill="#e4e4e4"/><rect x="327.5" y="1046.5" width="12" height="12" fill="#101010"/><rect x="329" y="1048" width="9" height="9" fill="#00f0f0"/><path d="M344,1043 V1050 H352 M344,1046.5 H350" stroke="#ff2020" stroke-width="1.3" fill="none"/><path d="M345.5,1068 V1058 H352" stroke="#2020ff" stroke-width="1.3" fill="none"/><path d="M336,1058 L336,1068 L338.5,1065.5 L341,1069 L342.5,1068 L340.5,1064.5 L344,1064.5 Z" fill="#000"/><path d="M324,1061 H333 M324,1065 H333" stroke="#fff" stroke-width="1"/></g>
<rect x="313" y="1077" width="51" height="3" fill="#76b9ed" />
<g shape-rendering="auto"><circle cx="399.8" cy="1055" r="14" fill="#dd4b39"/><path d="M399.8,1055 L387.7,1062 A14,14 0 0 1 387.7,1048 Z" fill="#dd4b39"/><path d="M399.8,1055 L387.7,1062 A14,14 0 0 0 406.8,1067.1 Z" fill="#1da462"/><path d="M399.8,1055 L406.8,1067.1 A14,14 0 0 0 413.8,1055 L413.8,1055 A14,14 0 0 0 411.9,1048 Z" fill="#ffcd46"/><circle cx="399.8" cy="1055" r="6.3" fill="#fff"/><circle cx="399.8" cy="1055" r="5" fill="#4a8af4"/></g>
<rect x="375" y="1077" width="51" height="3" fill="#76b9ed" />
<g shape-rendering="auto"><path d="M447.5,1044.5 H458 L460,1046.5 H475.5 V1066 H447.5 Z" fill="#f8d775"/><rect x="448.5" y="1045" width="8" height="2.5" fill="#fff"/><rect x="449" y="1045.5" width="2" height="1.5" fill="#3a96dd"/><path d="M447.5,1049 H475.5 V1066 H447.5 Z" fill="#fbe49a"/><path d="M453,1066 V1055 H470 V1066 H466.5 V1058.5 H456.5 V1066 Z" fill="#3aa0e0"/></g>
<rect x="437" y="1077" width="51" height="3" fill="#76b9ed" />
<rect x="477" y="1077" width="11" height="3" fill="#5a8ab0" />
<rect x="494" y="1030" width="61" height="50" fill="#ffffff" fill-opacity="0.12"/>
<g shape-rendering="auto"><rect x="509" y="1045" width="25" height="24.5" fill="#000"/><rect x="510" y="1046" width="23" height="22.5" fill="#ffff80"/><path d="M511,1055 L514,1060 L518,1058 M512,1064 H530 M516,1066 H528" stroke="#000" stroke-width="1" fill="none"/><rect x="516" y="1040.5" width="22.5" height="19.5" fill="#000"/><rect x="517" y="1041.5" width="20.5" height="17.5" fill="#fff"/><path d="M520.7,1041.5 V1059 M524.4,1041.5 V1059 M528.1,1041.5 V1059 M531.8,1041.5 V1059 M517,1045.9 H537.5 M517,1050.3 H537.5 M517,1054.7 H537.5" stroke="#000" stroke-width="0.8"/><path d="M518,1044 Q523,1044 525,1050 Q528,1056 536,1049" stroke="#00c000" stroke-width="1.3" fill="none"/><path d="M534,1042 L537,1043.5 L534,1045 Z M534,1050 L537,1051.5 L534,1053 Z" fill="#ff0000"/></g>
<rect x="494" y="1077" width="61" height="3" fill="#76b9ed" />
<g shape-rendering="auto"><path d="M1619.5,1058.5 L1627,1051.5 L1634.5,1058.5" fill="none" stroke="#fff" stroke-width="1.2"/></g>
<g shape-rendering="auto"><path d="M1648,1049 L1652.5,1046 L1657,1049 L1652.5,1052 Z M1657,1049 L1661.5,1046 L1666,1049 L1661.5,1052 Z M1648,1055 L1652.5,1052 L1657,1055 L1652.5,1058 Z M1657,1055 L1661.5,1052 L1666,1055 L1661.5,1058 Z M1652.5,1059 L1657,1056 L1661.5,1059 L1657,1062 Z" fill="#fff"/><circle cx="1661.5" cy="1059.5" r="4" fill="#20b040"/><path d="M1659.5,1059.5 L1661,1061 L1663.5,1058" stroke="#fff" stroke-width="1" fill="none"/></g>
<g shape-rendering="auto"><rect x="1678.5" y="1050.5" width="17" height="10" fill="none" stroke="#fff" stroke-width="1.2"/><rect x="1696" y="1053.5" width="1.5" height="4" fill="#fff"/><rect x="1680.5" y="1052.5" width="3" height="6" fill="#fff"/></g>
<g shape-rendering="auto"><circle cx="1723.5" cy="1062" r="1.3" fill="#fff"/><path d="M1714,1062 A9.5,9.5 0 0 1 1723.5,1052.5 M1717.5,1062 A6,6 0 0 1 1723.5,1056 M1710.5,1062 A13,13 0 0 1 1723.5,1049" fill="none" stroke="#fff" stroke-width="1.1"/></g>
<g shape-rendering="auto"><path d="M1737.5,1052 H1741 L1745.5,1047.5 V1063.5 L1741,1059 H1737.5 Z" fill="none" stroke="#fff" stroke-width="1.1"/><path d="M1748,1052.5 A3.5,3.5 0 0 1 1748,1058.5 M1750.5,1050 A7,7 0 0 1 1750.5,1061 M1753,1047 A11,11 0 0 1 1753,1064" fill="none" stroke="#fff" stroke-width="1.1"/></g>
<text x="1807.5" y="1048.8" font-family="Liberation Sans" font-size="14" font-weight="400" fill="#fff" text-anchor="middle" style="white-space:pre" textLength="35" lengthAdjust="spacingAndGlyphs" >23:58</text>
<text x="1807.5" y="1071.7" font-family="Liberation Sans" font-size="15" font-weight="400" fill="#fff" text-anchor="middle" style="white-space:pre" textLength="74.7" lengthAdjust="spacingAndGlyphs" >26/01/2017</text>
<g shape-rendering="auto"><path d="M1869.5,1045.5 H1888.5 V1061 H1881 L1879,1063.5 L1877,1061 H1869.5 Z" fill="none" stroke="#fff" stroke-width="1.1"/></g>
<rect x="1914" y="1030" width="1" height="50" fill="#3a3a3a" />
</svg>
</body></html>
